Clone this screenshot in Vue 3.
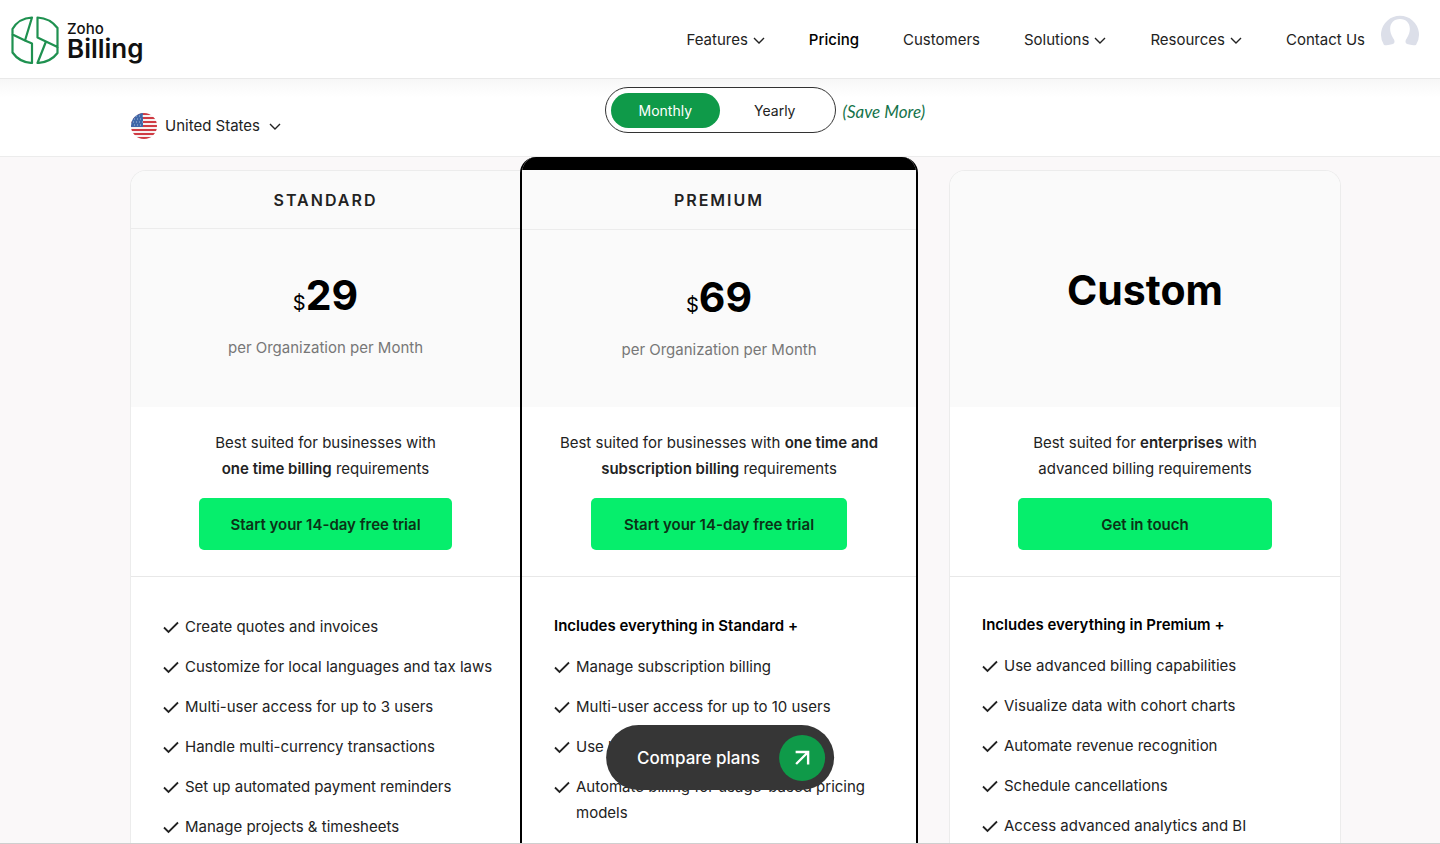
<script setup>
import { ref } from 'vue'

const period = ref('monthly')
const country = ref('United States')

const nav = [
  { label: 'Features', menu: true },
  { label: 'Pricing', active: true },
  { label: 'Customers' },
  { label: 'Solutions', menu: true },
  { label: 'Resources', menu: true },
  { label: 'Contact Us' },
]

const plans = [
  {
    id: 'standard',
    name: 'Standard',
    price: '29',
    pitch: [
      [{ t: 'Best suited for businesses with' }],
      [{ t: 'one time billing', b: true }, { t: ' requirements' }],
    ],
    cta: 'Start your 14-day free trial',
    features: [
      'Create quotes and invoices',
      'Customize for local languages and tax laws',
      'Multi-user access for up to 3 users',
      'Handle multi-currency transactions',
      'Set up automated payment reminders',
      'Manage projects & timesheets',
    ],
  },
  {
    id: 'premium',
    name: 'Premium',
    price: '69',
    pitch: [
      [{ t: 'Best suited for businesses with ' }, { t: 'one time and', b: true }],
      [{ t: 'subscription billing', b: true }, { t: ' requirements' }],
    ],
    cta: 'Start your 14-day free trial',
    includes: 'Includes everything in Standard +',
    features: [
      'Manage subscription billing',
      'Multi-user access for up to 10 users',
      'Use hosted payment pages',
      'Automate billing for usage-based pricing models',
    ],
  },
  {
    id: 'custom',
    name: 'Custom',
    pitch: [
      [{ t: 'Best suited for ' }, { t: 'enterprises', b: true }, { t: ' with' }],
      [{ t: 'advanced billing requirements' }],
    ],
    cta: 'Get in touch',
    includes: 'Includes everything in Premium +',
    features: [
      'Use advanced billing capabilities',
      'Visualize data with cohort charts',
      'Automate revenue recognition',
      'Schedule cancellations',
      'Access advanced analytics and BI',
    ],
  },
]
</script>

<template>
  <div class="page">
    <header class="header">
      <a class="brand" href="#" aria-label="Zoho Billing">
        <svg class="logo" viewBox="0 0 48 48" aria-hidden="true">
          <g fill="none" stroke="#1f9150" stroke-width="2.2" stroke-linejoin="round">
            <path d="M21 1.500L14 24.500L1.500 18.500V13C5.500 6 12 2 21 1.500Z" />
            <path d="M1.500 18.500V36.500C6 43 12 46.500 21 47V27.500L14 24.500" />
            <path d="M26.500 1.500C35.500 2 42 6 46.500 12V31L26.500 21.500Z" />
            <path d="M46.500 31V37C42 43 35.500 46.500 26.500 47L35 25.500" />
          </g>
        </svg>
        <span class="brand-name"><span class="brand-top">Zoho</span><span class="brand-main">Billing</span></span>
      </a>
      <nav class="nav">
        <a v-for="item in nav" :key="item.label" href="#" class="nav-link" :class="{ active: item.active }">
          {{ item.label }}
          <svg v-if="item.menu" class="chev" viewBox="0 0 12 12" aria-hidden="true"><path d="M1 4L6 9L11 4" /></svg>
        </a>
      </nav>
      <a class="avatar" href="#" aria-label="Account">
        <svg viewBox="0 0 40 40" aria-hidden="true">
          <path fill="#dcdfe9" d="M4 31A19 19 0 1 1 36 31C33 31.500 30 31 27 30C25 29 25 26.500 27 24C33 14 29 5 20 5S7 14 13 24C15 26.500 15 29 13 30C10 31 7 31.500 4 31Z" />
        </svg>
      </a>
    </header>

    <section class="toolbar">
      <label class="country">
        <svg class="flag" viewBox="0 0 26 26" aria-hidden="true">
          <defs><clipPath id="flag-disc"><circle cx="13" cy="13" r="13" /></clipPath></defs>
          <g clip-path="url(#flag-disc)">
            <rect width="26" height="26" fill="#f7f1f1" />
            <path stroke="#cf3b43" stroke-width="2" d="M0 1H26M0 5H26M0 9H26M0 13H26M0 17H26M0 21H26M0 25H26" />
            <rect width="12" height="14" fill="#3f67a8" />
            <path stroke="#a9bddb" stroke-width="1" stroke-dasharray="1 2" d="M2 3H12M3 6H12M2 9H12M3 12H12" />
          </g>
        </svg>
        <select v-model="country" aria-label="Country">
          <option>United States</option>
        </select>
        <svg class="chev" viewBox="0 0 12 12" aria-hidden="true"><path d="M1 4L6 9L11 4" /></svg>
      </label>
      <div class="toggle">
        <button type="button" :class="{ on: period === 'monthly' }" @click="period = 'monthly'">Monthly</button>
        <button type="button" :class="{ on: period === 'yearly' }" @click="period = 'yearly'">Yearly</button>
      </div>
      <span class="save">(Save More)</span>
    </section>

    <main class="plans">
      <article v-for="plan in plans" :key="plan.id" class="plan" :class="plan.id">
        <h2 v-if="plan.price" class="plan-name">{{ plan.name }}</h2>
        <div v-if="plan.price" class="plan-price">
          <p class="amount"><span class="currency">$</span>{{ plan.price }}</p>
          <p class="per">per Organization per Month</p>
        </div>
        <div v-else class="plan-custom"><h2>{{ plan.name }}</h2></div>
        <div class="pitch">
          <p>
            <span v-for="(line, i) in plan.pitch" :key="i" class="pitch-line">
              <template v-for="(part, j) in line" :key="j"><b v-if="part.b">{{ part.t }}</b><template v-else>{{ part.t }}</template></template>
            </span>
          </p>
          <button type="button" class="cta">{{ plan.cta }}</button>
        </div>
        <div class="features">
          <h3 v-if="plan.includes">{{ plan.includes }}</h3>
          <ul>
            <li v-for="f in plan.features" :key="f">
              <svg viewBox="0 0 16 14" aria-hidden="true"><path d="M1 7.500L5.500 12L15 2.500" /></svg>
              <span>{{ f }}</span>
            </li>
          </ul>
        </div>
      </article>
    </main>

    <button type="button" class="compare">
      Compare plans
      <span class="compare-icon">
        <svg viewBox="0 0 16 16" aria-hidden="true"><path d="M1.500 2H14V14.500M14 2L2 14" /></svg>
      </span>
    </button>
  </div>
</template>

<style>
body {
  margin: 0;
  overflow: hidden;
}
</style>

<style scoped>
.page {
  height: 100vh;
  overflow: hidden;
  display: flex;
  flex-direction: column;
  box-sizing: border-box;
  border-bottom: 1px solid #cfcfcf;
  background: #faf8f9;
  color: #222;
  font-family: Inter, "Liberation Sans", sans-serif;
  font-size: 15px;
}
.page *, .page *::before {
  box-sizing: border-box;
}
a {
  color: inherit;
  text-decoration: none;
}
h2, h3, p, ul {
  margin: 0;
  padding: 0;
}
button, select {
  font: inherit;
  color: inherit;
  border: 0;
  padding: 0;
  background: none;
  cursor: pointer;
}
.chev {
  width: 12px;
  height: 12px;
  fill: none;
  stroke: currentColor;
  stroke-width: 1.4;
}
.header {
  flex: none;
  height: 79px;
  display: flex;
  align-items: center;
  padding: 0 20px 0 11px;
  background: #fff;
  box-shadow: inset 0 -1px #e9e9e9;
}
.brand {
  display: flex;
  align-items: center;
  gap: 8px;
  color: #111;
}
.logo {
  width: 48px;
  height: 48px;
}
.brand-name {
  display: flex;
  flex-direction: column;
  padding-top: 3px;
}
.brand-top {
  font-size: 15px;
  line-height: 16px;
  font-weight: 500;
}
.brand-main {
  font-size: 26px;
  line-height: 24px;
  font-weight: 600;
}
.nav {
  margin-left: auto;
  display: flex;
  gap: 44px;
}
.nav-link {
  display: flex;
  align-items: center;
  gap: 5px;
  line-height: 20px;
}
.nav-link.active {
  font-weight: 500;
  color: #000;
}
.avatar {
  width: 40px;
  height: 40px;
  margin: 0 0 12px 15px;
}
.avatar svg {
  display: block;
}
.toolbar {
  flex: none;
  height: 78px;
  display: grid;
  grid-template-columns: 1fr auto 1fr;
  align-items: start;
  padding-top: 8px;
  background: linear-gradient(#f7f7f7, #fff 18px);
  border-bottom: 1px solid #ececec;
}
.country {
  display: flex;
  align-items: center;
  padding: 26px 0 0 131px;
}
.flag {
  width: 26px;
  height: 26px;
  margin-right: 8px;
}
.country select {
  appearance: none;
  line-height: 20px;
  margin-right: 8px;
}
.toggle {
  display: flex;
  align-items: center;
  width: 231px;
  height: 46px;
  padding: 0 5px;
  border: 1px solid #333;
  border-radius: 23px;
  background: #fff;
  font-size: 14px;
}
.toggle button {
  flex: 1;
  height: 35px;
  border-radius: 18px;
}
.toggle button.on {
  background: #0f9a49;
  color: #fff;
}
.save {
  padding: 15px 0 0 7px;
  font-family: Lato, "Liberation Sans", sans-serif;
  font-style: italic;
  font-size: 17px;
  line-height: 20px;
  color: #14734a;
}
.plans {
  flex: 1;
  min-height: 0;
  display: grid;
  grid-template-columns: 390fr 398fr 423fr;
  padding: 0 99px 0 130px;
}
.plan {
  margin-top: 13px;
  background: #fff;
  border: 1px solid #ececec;
  border-bottom: 0;
  border-radius: 16px 16px 0 0;
  overflow: hidden;
}
.standard {
  border-right: 0;
  border-radius: 16px 0 0 0;
}
.premium {
  margin-top: 0;
  border: 2px solid #000;
  border-width: 0 2px;
}
.premium::before {
  content: "";
  display: block;
  height: 13px;
  background: #000;
}
.custom {
  margin-left: 31px;
}
.plan-name {
  height: 58px;
  border-bottom: 1px solid #ececec;
  background: #fafafa;
  text-align: center;
  text-transform: uppercase;
  font-size: 16px;
  line-height: 58px;
  font-weight: 600;
  letter-spacing: 2px;
}
.premium .plan-name {
  height: 60px;
  line-height: 60px;
}
.plan-price {
  height: 178px;
  padding-top: 41px;
  background: #fafafa;
  text-align: center;
}
.premium .plan-price {
  height: 177px;
  padding-top: 42px;
}
.amount {
  font-size: 41px;
  line-height: 50px;
  font-weight: 700;
  color: #000;
}
.currency {
  font-size: 20px;
  font-weight: 400;
}
.per {
  margin-top: 10px;
  line-height: 20px;
  color: #777;
}
.plan-custom {
  height: 236px;
  padding-top: 94px;
  background: #fafafa;
  text-align: center;
}
.plan-custom h2 {
  font-size: 41px;
  line-height: 50px;
  font-weight: 700;
  color: #000;
}
.pitch {
  height: 170px;
  padding-top: 23px;
  border-bottom: 1px solid #e8e8e8;
  text-align: center;
}
.pitch p {
  line-height: 26px;
}
.pitch-line {
  display: block;
}
.pitch b {
  font-weight: 600;
}
.cta {
  width: 65%;
  height: 52px;
  margin-top: 16px;
  border-radius: 5px;
  background: #06ee6c;
  color: #0b3216;
  font-weight: 600;
}
.features {
  padding: 36px 12px 0 32px;
}
.standard .features {
  padding-top: 37px;
}
.custom .features {
  padding-top: 35px;
}
.features h3 {
  margin-bottom: 15px;
  font-size: 15px;
  line-height: 26px;
  font-weight: 600;
  color: #000;
}
.features ul {
  list-style: none;
  display: flex;
  flex-direction: column;
  gap: 14px;
}
.features li {
  display: flex;
  align-items: flex-start;
  gap: 6px;
  line-height: 26px;
}
.features li svg {
  flex: none;
  width: 16px;
  height: 14px;
  margin-top: 6px;
  fill: none;
  stroke: #222;
  stroke-width: 1.8;
}
.compare {
  position: fixed;
  left: 50%;
  bottom: 54px;
  transform: translateX(-50%);
  display: flex;
  align-items: center;
  gap: 19px;
  height: 65px;
  padding: 0 9px 0 31px;
  border-radius: 33px;
  background: #363636;
  color: #fff;
  font-size: 17px;
  font-weight: 500;
}
.compare-icon {
  width: 46px;
  height: 46px;
  display: flex;
  align-items: center;
  justify-content: center;
  border-radius: 50%;
  background: #0f9a49;
}
.compare-icon svg {
  width: 16px;
  height: 16px;
  fill: none;
  stroke: #fff;
  stroke-width: 2.4;
}
</style>
